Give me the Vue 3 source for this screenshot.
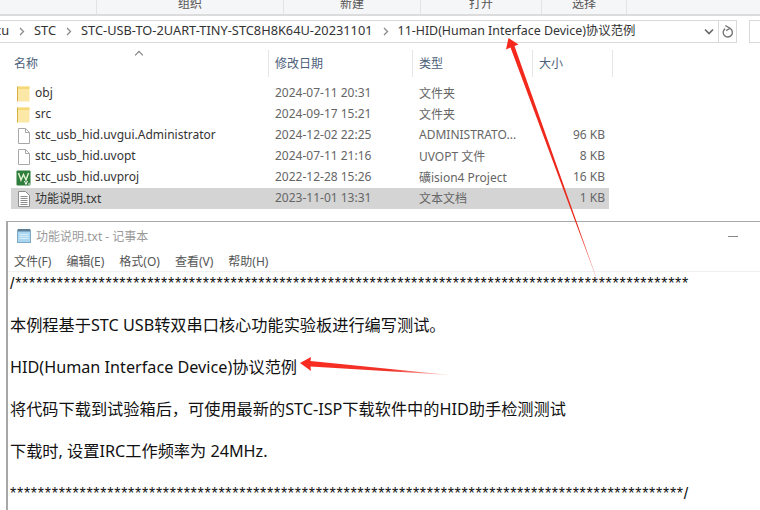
<script setup>
const tabs = [
  { label: '', width: 97 },
  { label: '组织', width: 187 },
  { label: '新建', width: 137 },
  { label: '打开', width: 121 },
  { label: '选择', width: 85 }
]
const rows = [
  { icon: 'folder', name: 'obj', date: '2024-07-11 20:31', type: '文件夹', size: '' },
  { icon: 'folder', name: 'src', date: '2024-09-17 15:21', type: '文件夹', size: '' },
  { icon: 'file', name: 'stc_usb_hid.uvgui.Administrator', date: '2024-12-02 22:25', type: 'ADMINISTRATO...', size: '96 KB' },
  { icon: 'file', name: 'stc_usb_hid.uvopt', date: '2024-07-11 21:16', type: 'UVOPT 文件', size: '8 KB' },
  { icon: 'uv', name: 'stc_usb_hid.uvproj', date: '2022-12-28 15:26', type: '礦ision4 Project', size: '16 KB' },
  { icon: 'txt', name: '功能说明.txt', date: '2023-11-01 13:31', type: '文本文档', size: '1 KB', selected: true }
]
const crumbs = ['cu', 'STC', 'STC-USB-TO-2UART-TINY-STC8H8K64U-20231101', '11-HID(Human Interface Device)协议范例']
const menu = ['文件(F)', '编辑(E)', '格式(O)', '查看(V)', '帮助(H)']
const stars = n => '*'.repeat(n)
const lines = [
  '/' + stars(97),
  '',
  '本例程基于STC USB转双串口核心功能实验板进行编写测试。',
  '',
  'HID(Human Interface Device)协议范例',
  '',
  '将代码下载到试验箱后，可使用最新的STC-ISP下载软件中的HID助手检测测试',
  '',
  '下载时, 设置IRC工作频率为 24MHz.',
  '',
  stars(97) + '/'
]
</script>

<template>
  <div class="page">
    <div class="ribbon">
      <div v-for="(t, i) in tabs" :key="i" class="tab" :style="{ width: t.width + 'px' }">
        <span>{{ t.label }}</span>
      </div>
    </div>

    <div class="addr-row">
      <div class="addr">
        <div class="crumbs">
          <template v-for="(c, i) in crumbs" :key="c">
            <svg v-if="i > 0" class="sep" width="7" height="9" viewBox="0 0 7 9"><path d="M2 1 L5.5 4.5 L2 8" fill="none" stroke="#8a8a8a" stroke-width="1.3"/></svg>
            <span :class="{ first: i === 0, last: i === 3 }">{{ c }}</span>
          </template>
        </div>
        <svg class="drop" width="10" height="7" viewBox="0 0 10 7"><path d="M1 1.5 L5 5.5 L9 1.5" fill="none" stroke="#666" stroke-width="1.6"/></svg>
        <div class="refresh">
          <svg width="12" height="14" viewBox="0 0 12 14"><path d="M3.2 3.6 A4.6 4.6 0 1 0 8 3.4" fill="none" stroke="#777" stroke-width="1.4"/><path d="M3.4 0.6 L8 3.2 L4.2 5.6" fill="none" stroke="#777" stroke-width="1.3"/></svg>
        </div>
      </div>
      <div class="search"></div>
    </div>

    <div class="explorer">
      <div class="head">
        <div class="h-name">名称</div>
        <div class="h-col">修改日期</div>
        <div class="h-col">类型</div>
        <div class="h-col">大小</div>
        <div class="h-end"></div>
      </div>
      <div v-for="r in rows" :key="r.name" class="row" :class="{ selected: r.selected }">
        <div class="c-name">
          <svg v-if="r.icon === 'folder'" class="ico" width="16" height="16" viewBox="0 0 16 16">
            <path d="M1.5 0.5 H13.5 V15.5 H1.5 Z" fill="#fbe7a6"/>
            <path d="M1.5 0.5 H13.5 V3 H1.5 Z" fill="#f6d876"/>
            <path d="M1.5 0.5 V15.5" stroke="#d9b04c" stroke-width="1"/>
          </svg>
          <svg v-else-if="r.icon === 'file'" class="ico" width="16" height="16" viewBox="0 0 16 16">
            <path d="M2.5 0.5 H9.5 L13.5 4.5 V15.5 H2.5 Z" fill="#fff" stroke="#a8a8a8"/>
            <path d="M9.5 0.5 V4.5 H13.5" fill="none" stroke="#a8a8a8"/>
          </svg>
          <svg v-else-if="r.icon === 'uv'" class="ico" width="16" height="16" viewBox="0 0 16 16">
            <rect x="0.5" y="0.5" width="14" height="15" rx="1" fill="#2f7d3a"/>
            <path d="M2.5 3 L5 10 L7.5 4.5 L10 10 L12.5 3" fill="none" stroke="#dff0d0" stroke-width="1.5"/>
            <path d="M8.5 11 L10 14.5 L11.5 11 M12.2 14 H14.2" fill="none" stroke="#fff" stroke-width="1"/>
          </svg>
          <svg v-else class="ico" width="16" height="16" viewBox="0 0 16 16">
            <path d="M2.5 0.5 H9.5 L13.5 4.5 V15.5 H2.5 Z" fill="#fff" stroke="#8d8d8d"/>
            <path d="M4.5 5.5 H11.5 M4.5 7.5 H11.5 M4.5 9.5 H11.5 M4.5 11.5 H11.5 M4.5 13.5 H11.5" stroke="#8d8d8d" stroke-width="1"/>
          </svg>
          <span>{{ r.name }}</span>
        </div>
        <div class="c-col">{{ r.date }}</div>
        <div class="c-col">{{ r.type }}</div>
        <div class="c-size">{{ r.size }}</div>
      </div>
    </div>

    <div class="notepad">
      <div class="np-title">
        <svg width="16" height="16" viewBox="0 0 16 16">
          <rect x="1.5" y="2" width="13" height="12.5" fill="#a9d6ee" stroke="#7fa9c4"/>
          <path d="M2 1 H14 V3.5 H2 Z" fill="#5a7f96"/>
          <path d="M3.5 6.5 H12.5 M3.5 8.5 H12.5 M3.5 10.5 H12.5" stroke="#d6eef9"/>
        </svg>
        <span class="np-name">功能说明.txt - 记事本</span>
        <span class="np-min"></span>
      </div>
      <div class="np-menu">
        <span v-for="m in menu" :key="m">{{ m }}</span>
      </div>
      <div class="np-text">
        <div v-for="(l, i) in lines" :key="i" class="line" :class="{ starline: i === 0 || i === 10 }">{{ l }}</div>
      </div>
    </div>

    <svg class="overlay" width="760" height="510" viewBox="0 0 760 510">
      <defs>
        <linearGradient id="a1" x1="508" y1="38" x2="600" y2="288" gradientUnits="userSpaceOnUse">
          <stop offset="0" stop-color="#f5291c"/>
          <stop offset="0.75" stop-color="#e8281c"/>
          <stop offset="1" stop-color="#f7a8a0"/>
        </linearGradient>
        <linearGradient id="a2" x1="300" y1="363" x2="450" y2="375" gradientUnits="userSpaceOnUse">
          <stop offset="0" stop-color="#fa2b20"/>
          <stop offset="0.6" stop-color="#f0342a"/>
          <stop offset="1" stop-color="#fbd0cc"/>
        </linearGradient>
      </defs>
      <path d="M508.5 38 L518.5 44.5 L514.5 46 L600 288 L510.5 47.5 L506 49.5 Z" fill="url(#a1)"/>
      <path d="M300 363 L311 357 L310.5 361 L450 375 L310.5 366.5 L311 371 Z" fill="url(#a2)"/>
    </svg>
  </div>
</template>

<style>
html, body { margin: 0; padding: 0; background: #fff; overflow: hidden; }
</style>

<style scoped>
.page {
  position: relative;
  width: 760px;
  height: 510px;
  overflow: hidden;
  background: #fff;
  font-family: "Noto Sans", "Noto Sans CJK SC", sans-serif;
  font-size: 12px;
  color: #333;
}
.ribbon {
  display: flex;
  height: 14px;
  background: #f5f6f8;
  border-bottom: 2px solid #dcdcdc;
  overflow: hidden;
}
.tab {
  box-sizing: border-box;
  height: 14px;
  border-right: 1px solid #e2e3e5;
  text-align: center;
  color: #555;
  line-height: 8px;
  font-size: 12px;
}
.addr-row {
  display: flex;
  gap: 12px;
  margin-top: 4px;
  height: 23px;
}
.addr {
  box-sizing: border-box;
  width: 737px;
  display: flex;
  align-items: center;
  border: 1px solid #d9d9d9;
  border-left: none;
}
.crumbs {
  flex: 1;
  display: flex;
  align-items: center;
  gap: 9px;
  color: #333;
  white-space: nowrap;
  font-size: 12.8px;
  line-height: 19px;
  padding-bottom: 2px;
  overflow: hidden;
}
.first { margin-left: -5px; }
.last { font-size: 12.4px; }
.sep { margin-top: 2px; }
.drop { margin-right: 4px; }
.refresh {
  width: 17px;
  height: 100%;
  border-left: 1px solid #d9d9d9;
  display: flex;
  align-items: center;
  justify-content: center;
}
.search {
  flex: 1;
  border: 1px solid #d9d9d9;
  border-right: none;
}
.explorer {
  margin-top: 7px;
  padding-left: 11px;
}
.head {
  display: flex;
  height: 27px;
  width: 602px;
  color: #4c607a;
  align-items: stretch;
  margin-bottom: 6px;
  position: relative;
}
.head::before {
  content: "";
  position: absolute;
  left: 125px;
  top: 2px;
  width: 5px;
  height: 5px;
  border-left: 1px solid #777;
  border-top: 1px solid #777;
  transform: rotate(45deg);
}
.h-name { width: 257px; padding-left: 3px; box-sizing: border-box; line-height: 28px; }
.h-col { border-left: 1px solid #e5e5e5; padding-left: 6px; box-sizing: border-box; line-height: 28px; }
.h-col:nth-child(2) { width: 144px; }
.h-col:nth-child(3) { width: 120px; }
.h-col:nth-child(4) { width: 80px; }
.h-end { border-left: 1px solid #e5e5e5; }
.row {
  display: flex;
  align-items: center;
  box-sizing: border-box;
  height: 21px;
  padding-bottom: 2px;
  width: 598px;
  color: #666;
}
.row.selected { background: #d4d4d4; }
.c-name {
  width: 257px;
  display: flex;
  align-items: center;
  gap: 3px;
  padding-left: 5px;
  box-sizing: border-box;
  color: #333;
  white-space: nowrap;
}
.ico { margin-top: 2px; }
.c-col { padding-left: 7px; box-sizing: border-box; white-space: nowrap; }
.c-col:nth-child(2) { width: 144px; }
.c-col:nth-child(3) { width: 120px; }
.c-size { width: 73px; text-align: right; }
.notepad {
  margin: 12px 0 0 6px;
  border-top: 1px solid #a8a8a8;
  border-left: 2px solid #a8a8a8;
  height: 300px;
}
.np-title {
  display: flex;
  align-items: center;
  gap: 4px;
  box-sizing: border-box;
  height: 30px;
  padding: 0 0 3px 8px;
  color: #999;
  position: relative;
}
.np-name { color: #9a9a9a; }
.np-min {
  position: absolute;
  right: 22px;
  top: 14px;
  width: 10px;
  height: 1px;
  background: #888;
}
.np-menu {
  display: flex;
  gap: 15px;
  height: 19px;
  line-height: 19px;
  padding-left: 6px;
  color: #555;
  border-bottom: 1px solid #f0f0f0;
}
.np-text {
  padding: 1px 0 0 2px;
  color: #111;
  font-size: 16.2px;
  font-family: "Noto Sans", "Noto Sans CJK SC", sans-serif;
}
.line {
  height: 21px;
  line-height: 21px;
  white-space: pre;
}
.starline {
  font-family: "Liberation Sans", sans-serif;
  font-size: 16px;
  letter-spacing: 0.72px;
}
.overlay {
  position: absolute;
  left: 0;
  top: 0;
  pointer-events: none;
}
</style>
